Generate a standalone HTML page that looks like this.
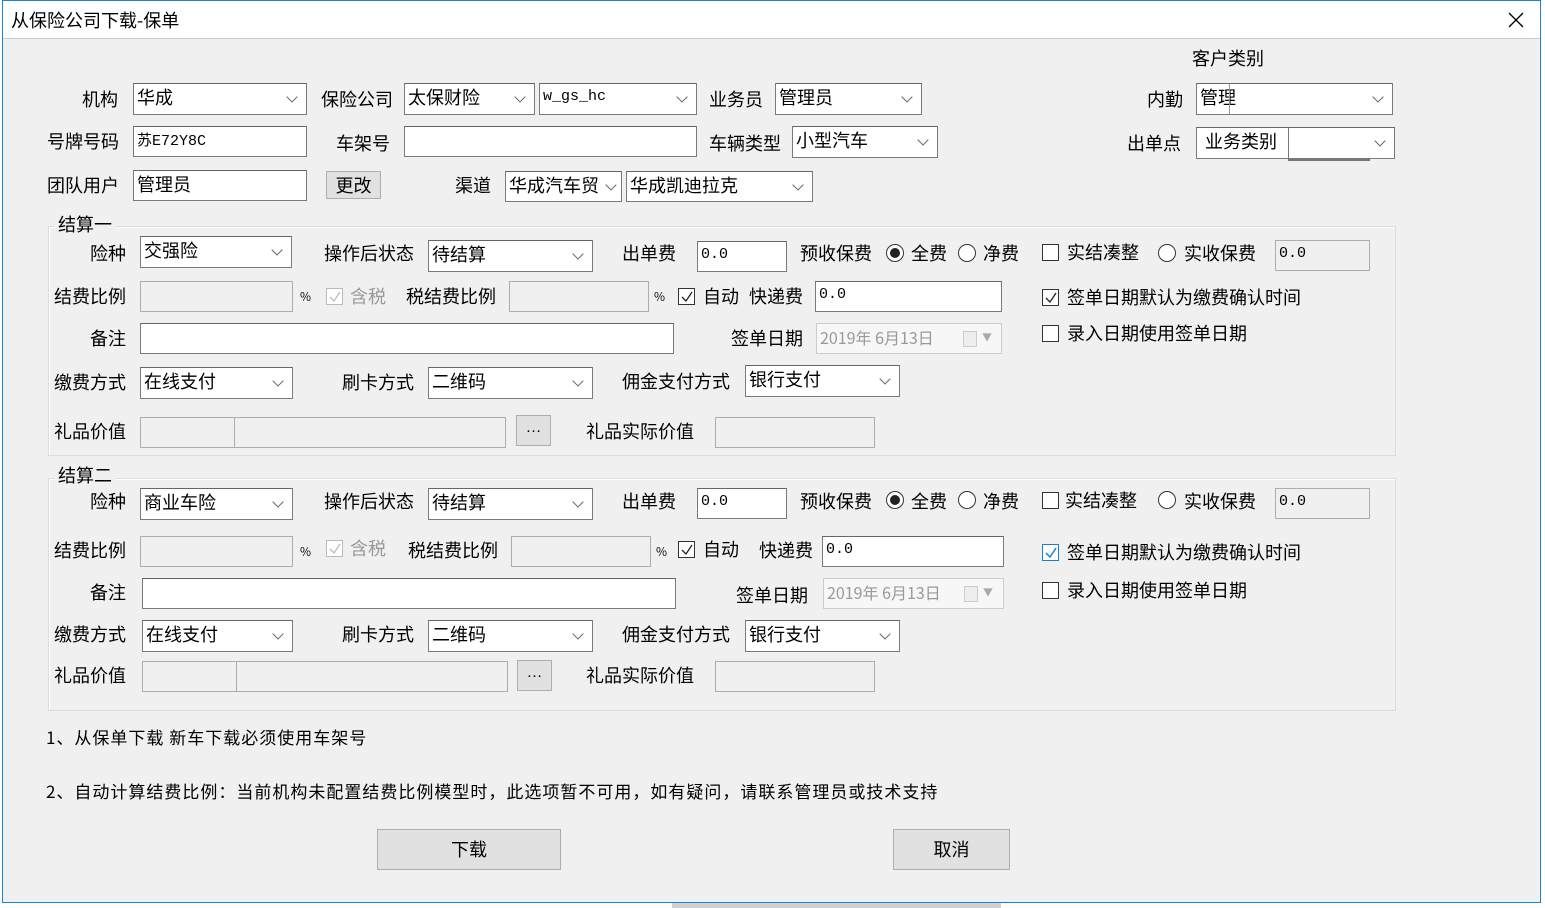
<!DOCTYPE html>
<html><head><meta charset="utf-8">
<style>
*{box-sizing:border-box;margin:0;padding:0}
body{width:1545px;height:908px;position:relative;overflow:hidden;background:#fff;font-family:"Liberation Sans","Noto Sans CJK SC",sans-serif;color:#000}
#win{position:absolute;left:2px;top:0;width:1539px;height:903px;border:1px solid #1883d7;background:#f0f0f0}
#title{position:absolute;left:0;top:0;width:100%;height:38px;background:#fff;border-bottom:1px solid #ccc}
.a{position:absolute}
.l{position:absolute;font-size:18px;line-height:24px;white-space:nowrap;font-family:"Noto Sans CJK SC",sans-serif}
.c,.t,.d{position:absolute;background:#fff;border:1px solid #7a7a7a;border-top-color:#666;font-size:18px;line-height:26px;padding-left:3px;white-space:nowrap;overflow:hidden;font-family:"Noto Sans CJK SC",sans-serif}
.d{background:#f0f0f0;border-color:#adadad}
.c i{position:absolute;right:10px;top:50%;width:8px;height:8px;border-right:1.3px solid #666;border-bottom:1.3px solid #666;transform:translateY(-75%) rotate(45deg)}
.m{font-family:"Liberation Mono",monospace;font-size:15px}
.k{position:absolute;width:17px;height:17px;border:1px solid #333;background:#fff}
.k.g{border-color:#bbb}
.k svg{position:absolute;left:1px;top:1px}
.r{position:absolute;width:18px;height:18px;border:1px solid #333;border-radius:50%;background:#fff}
.r.on::after{content:"";position:absolute;left:3px;top:3px;width:10px;height:10px;border-radius:50%;background:#222}
.g1{position:absolute;border:1px solid #dcdcdc;box-shadow:inset 1px 1px 0 #fff}
.b{position:absolute;background:#e1e1e1;border:1px solid #adadad;font-size:18px;text-align:center;font-family:"Noto Sans CJK SC",sans-serif}
.dots{font-family:"Liberation Sans",sans-serif;font-size:16px;line-height:24px;font-weight:normal}
.gray{color:#999}
</style></head><body>
<div id="win">
<div id="title">
<div class="l" style="left:8px;top:7px;font-size:18px">从保险公司下载-保单</div>
<svg class="a" style="left:1505px;top:11px" width="16" height="16"><path d="M1 1L15 15M15 1L1 15" stroke="#000" stroke-width="1.3"/></svg>
</div>
</div>
<div class="a" style="left:672px;top:903px;width:329px;height:5px;background:#d0d0d0"></div>

<div class="l" style="left:82px;top:87px">机构</div>
<div class="c" style="left:133px;top:83px;width:174px;height:32px">华成<i></i></div>
<div class="l" style="left:321px;top:87px">保险公司</div>
<div class="c" style="left:404px;top:83px;width:131px;height:32px">太保财险<i></i></div>
<div class="c m" style="left:539px;top:83px;width:158px;height:32px">w_gs_hc<i></i></div>
<div class="l" style="left:709px;top:87px">业务员</div>
<div class="c" style="left:775px;top:83px;width:147px;height:32px">管理员<i></i></div>
<div class="l" style="left:1192px;top:46px">客户类别</div>
<div class="l" style="left:1147px;top:87px">内勤</div>
<div class="c" style="left:1196px;top:83px;width:197px;height:32px">管理<i></i></div>
<div class="a" style="left:1229px;top:84px;width:1px;height:30px;background:#999"></div>

<div class="l" style="left:47px;top:129px">号牌号码</div>
<div class="t m" style="left:133px;top:126px;width:174px;height:31px"><span style="font-family:'Noto Sans CJK SC'">苏</span>E72Y8C</div>
<div class="l" style="left:336px;top:131px">车架号</div>
<div class="t" style="left:404px;top:126px;width:293px;height:31px"></div>
<div class="l" style="left:709px;top:131px">车辆类型</div>
<div class="c" style="left:792px;top:126px;width:146px;height:32px">小型汽车<i></i></div>
<div class="l" style="left:1127px;top:131px">出单点</div>
<div class="t" style="left:1196px;top:127px;width:199px;height:32px;padding-left:8px">业务类别</div>
<div class="c" style="left:1288px;top:127px;width:107px;height:32px"><i></i></div>
<div class="a" style="left:1288px;top:159px;width:82px;height:2px;background:#777"></div>

<div class="l" style="left:47px;top:173px">团队用户</div>
<div class="t" style="left:133px;top:170px;width:174px;height:31px">管理员</div>
<div class="b" style="left:326px;top:171px;width:55px;height:28px;line-height:26px">更改</div>
<div class="l" style="left:455px;top:173px">渠道</div>
<div class="c" style="left:505px;top:171px;width:117px;height:31px">华成汽车贸<i style="right:6px"></i></div>
<div class="c" style="left:626px;top:171px;width:187px;height:31px">华成凯迪拉克<i></i></div>

<div class="g1" style="left:48px;top:226px;width:1348px;height:230px"></div>
<div class="l" style="left:54px;top:212px;background:#f0f0f0;padding:0 4px">结算一</div>

<div class="l" style="left:90px;top:241px">险种</div>
<div class="c" style="left:140px;top:236px;width:152px;height:32px">交强险<i></i></div>
<div class="l" style="left:324px;top:241px">操作后状态</div>
<div class="c" style="left:428px;top:240px;width:165px;height:32px">待结算<i></i></div>
<div class="l" style="left:622px;top:241px">出单费</div>
<div class="t m" style="left:697px;top:241px;width:90px;height:31px">0.0</div>
<div class="l" style="left:800px;top:241px">预收保费</div>
<div class="r on" style="left:886px;top:244px"></div>
<div class="l" style="left:911px;top:241px">全费</div>
<div class="r" style="left:958px;top:244px"></div>
<div class="l" style="left:983px;top:241px">净费</div>
<div class="k" style="left:1042px;top:244px"></div>
<div class="l" style="left:1067px;top:240px">实结凑整</div>
<div class="r" style="left:1158px;top:244px"></div>
<div class="l" style="left:1184px;top:241px">实收保费</div>
<div class="d m" style="left:1275px;top:240px;width:95px;height:31px">0.0</div>

<div class="l" style="left:54px;top:284px">结费比例</div>
<div class="d" style="left:140px;top:281px;width:153px;height:31px"></div>
<div class="l" style="left:300px;top:285px;font-size:12px">%</div>
<div class="k g" style="left:326px;top:288px"><svg width="14" height="14"><path d="M2 7L6 11L12 2" fill="none" stroke="#bbb" stroke-width="1.3"/></svg></div>
<div class="l gray" style="left:350px;top:284px">含税</div>
<div class="l" style="left:406px;top:284px">税结费比例</div>
<div class="d" style="left:509px;top:281px;width:140px;height:31px"></div>
<div class="l" style="left:654px;top:285px;font-size:12px">%</div>
<div class="k" style="left:678px;top:288px"><svg width="14" height="14"><path d="M2 7L6 11L12 2" fill="none" stroke="#222" stroke-width="1.3"/></svg></div>
<div class="l" style="left:703px;top:284px">自动</div>
<div class="l" style="left:749px;top:284px">快递费</div>
<div class="t m" style="left:815px;top:281px;width:187px;height:31px">0.0</div>
<div class="k" style="left:1042px;top:289px"><svg width="14" height="14"><path d="M2 7L6 11L12 2" fill="none" stroke="#222" stroke-width="1.3"/></svg></div>
<div class="l" style="left:1067px;top:285px">签单日期默认为缴费确认时间</div>

<div class="l" style="left:90px;top:326px">备注</div>
<div class="t" style="left:140px;top:323px;width:534px;height:31px"></div>
<div class="l" style="left:731px;top:326px">签单日期</div>
<div class="d gray" style="left:816px;top:323px;width:186px;height:31px;background:#f7f7f7;border-color:#ccc;font-size:16px">2019年 6月13日<span style="position:absolute;left:146px;top:7px;width:14px;height:16px;border:1px solid #ccc;background:#eee"></span><span style="position:absolute;left:165px;top:0;font-size:10px;color:#aaa">▼</span></div>
<div class="k" style="left:1042px;top:325px"></div>
<div class="l" style="left:1067px;top:321px">录入日期使用签单日期</div>

<div class="l" style="left:54px;top:370px">缴费方式</div>
<div class="c" style="left:140px;top:367px;width:153px;height:32px">在线支付<i></i></div>
<div class="l" style="left:342px;top:370px">刷卡方式</div>
<div class="c" style="left:428px;top:367px;width:165px;height:32px">二维码<i></i></div>
<div class="l" style="left:622px;top:369px">佣金支付方式</div>
<div class="c" style="left:745px;top:365px;width:155px;height:32px">银行支付<i></i></div>

<div class="l" style="left:54px;top:419px">礼品价值</div>
<div class="d" style="left:140px;top:417px;width:95px;height:31px"></div>
<div class="d" style="left:234px;top:417px;width:272px;height:31px"></div>
<div class="b dots" style="left:516px;top:415px;width:35px;height:31px">…</div>
<div class="l" style="left:586px;top:419px">礼品实际价值</div>
<div class="d" style="left:715px;top:417px;width:160px;height:31px"></div>

<div class="g1" style="left:48px;top:478px;width:1348px;height:233px"></div>
<div class="l" style="left:54px;top:463px;background:#f0f0f0;padding:0 4px">结算二</div>

<div class="l" style="left:90px;top:489px">险种</div>
<div class="c" style="left:140px;top:488px;width:153px;height:32px">商业车险<i></i></div>
<div class="l" style="left:324px;top:489px">操作后状态</div>
<div class="c" style="left:428px;top:488px;width:165px;height:32px">待结算<i></i></div>
<div class="l" style="left:622px;top:489px">出单费</div>
<div class="t m" style="left:697px;top:488px;width:90px;height:31px">0.0</div>
<div class="l" style="left:800px;top:489px">预收保费</div>
<div class="r on" style="left:886px;top:491px"></div>
<div class="l" style="left:911px;top:489px">全费</div>
<div class="r" style="left:958px;top:491px"></div>
<div class="l" style="left:983px;top:489px">净费</div>
<div class="k" style="left:1042px;top:492px"></div>
<div class="l" style="left:1065px;top:488px">实结凑整</div>
<div class="r" style="left:1158px;top:491px"></div>
<div class="l" style="left:1184px;top:489px">实收保费</div>
<div class="d m" style="left:1275px;top:488px;width:95px;height:31px">0.0</div>

<div class="l" style="left:54px;top:538px">结费比例</div>
<div class="d" style="left:140px;top:536px;width:153px;height:31px"></div>
<div class="l" style="left:300px;top:540px;font-size:12px">%</div>
<div class="k g" style="left:326px;top:540px"><svg width="14" height="14"><path d="M2 7L6 11L12 2" fill="none" stroke="#bbb" stroke-width="1.3"/></svg></div>
<div class="l gray" style="left:350px;top:536px">含税</div>
<div class="l" style="left:408px;top:538px">税结费比例</div>
<div class="d" style="left:511px;top:536px;width:140px;height:31px"></div>
<div class="l" style="left:656px;top:540px;font-size:12px">%</div>
<div class="k" style="left:678px;top:541px"><svg width="14" height="14"><path d="M2 7L6 11L12 2" fill="none" stroke="#222" stroke-width="1.3"/></svg></div>
<div class="l" style="left:703px;top:537px">自动</div>
<div class="l" style="left:759px;top:538px">快递费</div>
<div class="t m" style="left:822px;top:536px;width:182px;height:31px">0.0</div>
<div class="k" style="left:1042px;top:544px;border-color:#1a7fd4"><svg width="14" height="14"><path d="M2 7L6 11L12 2" fill="none" stroke="#1a7fd4" stroke-width="1.5"/></svg></div>
<div class="l" style="left:1067px;top:540px">签单日期默认为缴费确认时间</div>

<div class="l" style="left:90px;top:580px">备注</div>
<div class="t" style="left:142px;top:578px;width:534px;height:31px"></div>
<div class="l" style="left:736px;top:583px">签单日期</div>
<div class="d gray" style="left:823px;top:578px;width:181px;height:31px;background:#f7f7f7;border-color:#ccc;font-size:16px">2019年 6月13日<span style="position:absolute;left:140px;top:7px;width:14px;height:16px;border:1px solid #ccc;background:#eee"></span><span style="position:absolute;left:159px;top:0;font-size:10px;color:#aaa">▼</span></div>
<div class="k" style="left:1042px;top:582px"></div>
<div class="l" style="left:1067px;top:578px">录入日期使用签单日期</div>

<div class="l" style="left:54px;top:622px">缴费方式</div>
<div class="c" style="left:142px;top:620px;width:151px;height:32px">在线支付<i></i></div>
<div class="l" style="left:342px;top:622px">刷卡方式</div>
<div class="c" style="left:428px;top:620px;width:165px;height:32px">二维码<i></i></div>
<div class="l" style="left:622px;top:622px">佣金支付方式</div>
<div class="c" style="left:745px;top:620px;width:155px;height:32px">银行支付<i></i></div>

<div class="l" style="left:54px;top:663px">礼品价值</div>
<div class="d" style="left:142px;top:661px;width:95px;height:31px"></div>
<div class="d" style="left:236px;top:661px;width:272px;height:31px"></div>
<div class="b dots" style="left:517px;top:660px;width:35px;height:31px">…</div>
<div class="l" style="left:586px;top:663px">礼品实际价值</div>
<div class="d" style="left:715px;top:661px;width:160px;height:31px"></div>

<div class="l" style="left:46px;top:725px;font-size:17px;letter-spacing:1px">1、从保单下载 新车下载必须使用车架号</div>
<div class="l" style="left:46px;top:779px;font-size:17px;letter-spacing:1px">2、自动计算结费比例：当前机构未配置结费比例模型时，此选项暂不可用，如有疑问，请联系管理员或技术支持</div>

<div class="b" style="left:377px;top:829px;width:184px;height:41px;line-height:38px">下载</div>
<div class="b" style="left:893px;top:829px;width:117px;height:41px;line-height:38px">取消</div>
</body></html>
